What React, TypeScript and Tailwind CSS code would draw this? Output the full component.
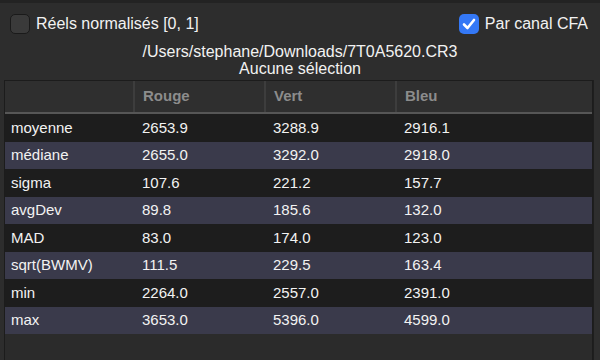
import React from 'react';

const rows: [string, string, string, string][] = [
  ['moyenne', '2653.9', '3288.9', '2916.1'],
  ['médiane', '2655.0', '3292.0', '2918.0'],
  ['sigma', '107.6', '221.2', '157.7'],
  ['avgDev', '89.8', '185.6', '132.0'],
  ['MAD', '83.0', '174.0', '123.0'],
  ['sqrt(BWMV)', '111.5', '229.5', '163.4'],
  ['min', '2264.0', '2557.0', '2391.0'],
  ['max', '3653.0', '5396.0', '4599.0'],
];

export default function App() {
  return (
    <div
      className="w-[600px] h-[360px] overflow-hidden bg-[#2d2d2d] text-[#f2f2f2] flex flex-col border-t-[3px] border-[#232323]"
      style={{ fontFamily: '"Liberation Sans", Arial, sans-serif' }}
    >
      {/* Options */}
      <div className="flex items-center justify-between pl-[10px] pr-[12px] pt-[10px] h-[32px]">
        <label className="flex items-center gap-[6px] text-[16px]">
          <span className="w-[20px] h-[20px] rounded-[5px] border border-[#1a1a1a] bg-[#3a3a3a]" />
          Réels normalisés [0, 1]
        </label>
        <label className="flex items-center gap-[6px] text-[16px]">
          <span className="w-[20px] h-[20px] rounded-[5px] bg-[#3478f6] flex items-center justify-center">
            <svg width="14" height="12" viewBox="0 0 14 12">
              <path d="M2 6.5 L5.5 10 L12 2" fill="none" stroke="white" strokeWidth="2.6" strokeLinecap="round" strokeLinejoin="round" />
            </svg>
          </span>
          Par canal CFA
        </label>
      </div>

      {/* File and selection */}
      <div className="flex flex-col items-center text-[16px] leading-[17px] mt-[8px]">
        <div>/Users/stephane/Downloads/7T0A5620.CR3</div>
        <div>Aucune sélection</div>
      </div>

      {/* Table */}
      <div className="flex mt-[3px] flex-1 min-h-0">
        <div className="ml-[4px] w-[589px] border-l border-r border-t border-[#1c1c1c] bg-[#2b2b2b] flex flex-col">
          <div className="flex h-[33px] shrink-0 bg-[#2f2f2f] border-b-[2px] border-[#565656] text-[15px] font-bold text-[#8c8c8c]">
            <div className="w-[130px] border-r-[2px] border-[#3d3d3d]" />
            <div className="w-[131px] border-r-[2px] border-[#3d3d3d] pl-[8px] flex items-center">Rouge</div>
            <div className="w-[131px] border-r-[2px] border-[#3d3d3d] pl-[8px] flex items-center">Vert</div>
            <div className="flex-1 pl-[8px] flex items-center">Bleu</div>
          </div>
          {rows.map((r, i) => (
            <div
              key={r[0]}
              className={`flex items-center h-[27.5px] shrink-0 text-[15px] ${i % 2 === 0 ? 'bg-[#1d1d1d]' : 'bg-[#3a3a4b]'}`}
            >
              <div className="w-[130px] pl-[6px]">{r[0]}</div>
              <div className="w-[131px] pl-[7px]">{r[1]}</div>
              <div className="w-[131px] pl-[7px]">{r[2]}</div>
              <div className="flex-1 pl-[7px]">{r[3]}</div>
            </div>
          ))}
        </div>
        <div className="w-[7px] border-l border-[#1e1e1e] bg-[#2e2e2e]" />
      </div>
    </div>
  );
}
